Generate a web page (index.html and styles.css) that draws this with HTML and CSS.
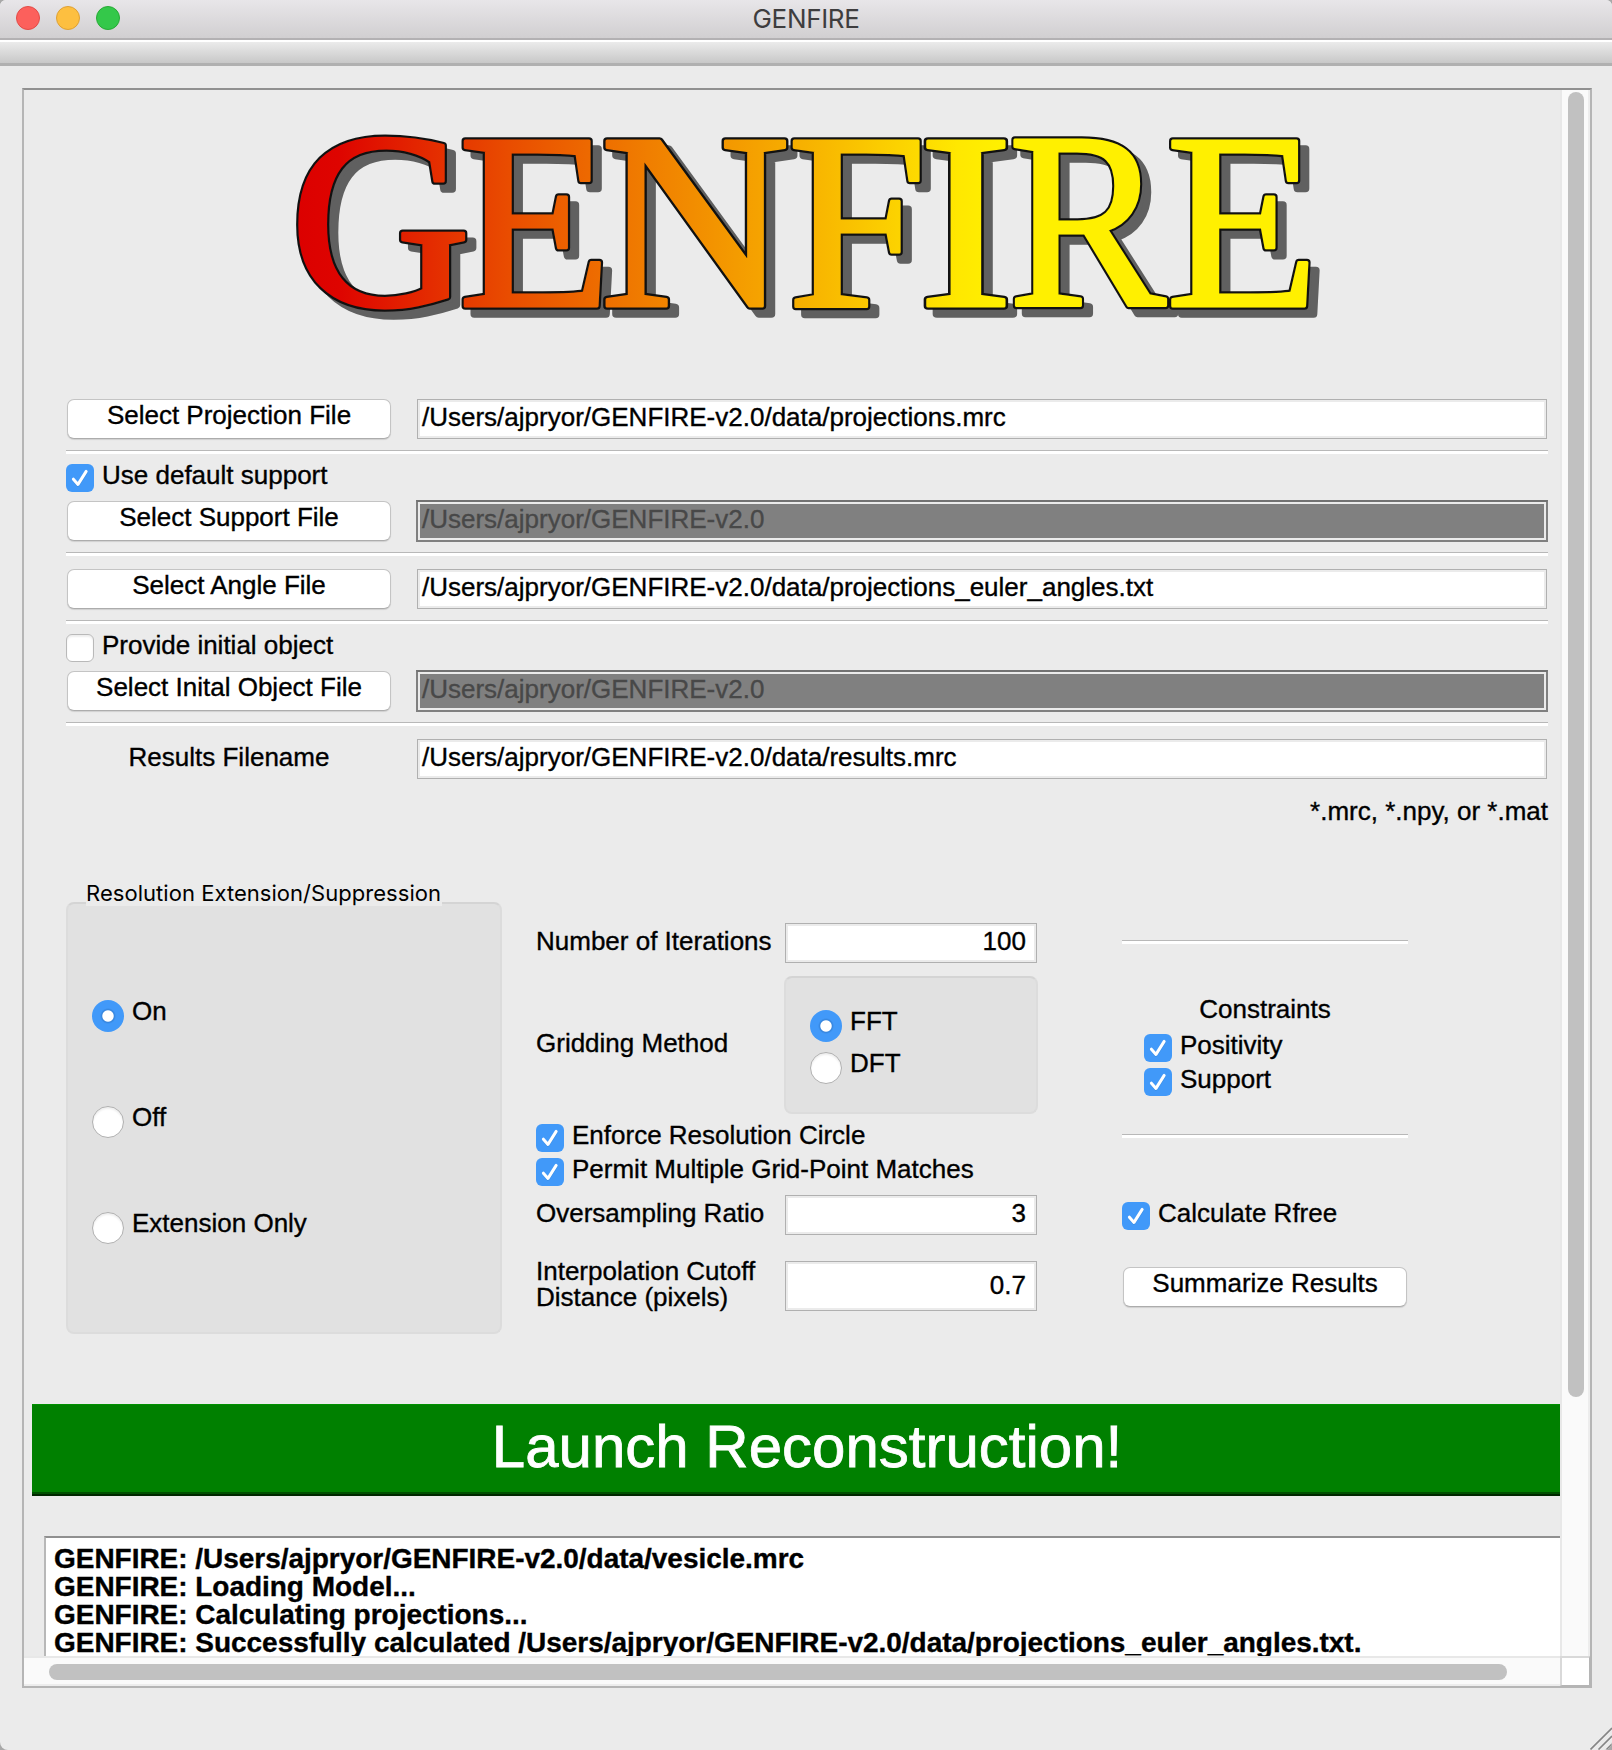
FILE: index.html
```html
<!DOCTYPE html>
<html lang="en">
<head>
<meta charset="utf-8">
<title>GENFIRE</title>
<link rel="stylesheet" href="styles.css">
</head>
<body>
<svg class="defs" width="0" height="0">
  <symbol id="check" viewBox="0 0 28 28">
    <path d="M7.6 15.8 12 21.200 20.400 8.200" fill="none" stroke="#2f7fd0" stroke-opacity=".55" stroke-width="3" stroke-linecap="round" stroke-linejoin="round"/>
    <path d="M7.400 15.200 12 20.400 20.200 7.400" fill="none" stroke="#fff" stroke-width="3" stroke-linecap="round" stroke-linejoin="round"/>
  </symbol>
</svg>
<div class="window">
  <header class="titlebar">
    <div class="lights"><i class="light red"></i><i class="light amber"></i><i class="light green"></i></div>
    <h1 class="title">GENFIRE</h1>
  </header>
  <div class="toolbar"></div>

  <main class="frame">
    <div class="viewport">
      <svg class="logo" viewBox="24 90 1536 304" width="1536" height="304">
        <defs>
          <linearGradient id="fire" gradientUnits="userSpaceOnUse" x1="296" y1="0" x2="1000" y2="0">
            <stop offset="0" stop-color="#dc0000"/>
            <stop offset=".06" stop-color="#de0400"/>
            <stop offset=".3" stop-color="#e94c00"/>
            <stop offset=".5" stop-color="#f07e00"/>
            <stop offset=".75" stop-color="#f8b800"/>
            <stop offset=".94" stop-color="#ffe800"/>
            <stop offset="1" stop-color="#fff000"/>
          </linearGradient>
          <mask id="letters" maskUnits="userSpaceOnUse" x="24" y="90" width="1536" height="304">
            <use href="#word" class="logo-fill"/>
          </mask>
        </defs>
        <use href="#word" class="logo-shadow" x="9" y="8"/>
        <g class="logo-outline">
          <g id="word" class="logo-text">
            <text transform="translate(289.500 306)">G</text>
            <text transform="translate(458 306)">E</text>
            <text transform="translate(599.500 306) scale(1.05 1)">N</text>
            <text transform="translate(787 306)">F</text>
            <text transform="translate(917.500 306) scale(1.150 1)">I</text>
            <text transform="translate(1008 306) scale(.94 1)">R</text>
            <text transform="translate(1165.500 306)">E</text>
          </g>
        </g>
        <rect x="24" y="90" width="1536" height="304" fill="url(#fire)" mask="url(#letters)"/>
      </svg>

      <section class="files">
        <div class="row"><button class="btn">Select Projection File</button><div class="field">/Users/ajpryor/GENFIRE-v2.0/data/projections.mrc</div></div>
        <div class="rule"></div>
        <div class="check"><span class="box on"><svg><use href="#check"/></svg></span><span>Use default support</span></div>
        <div class="row"><button class="btn">Select Support File</button><div class="field off">/Users/ajpryor/GENFIRE-v2.0</div></div>
        <div class="rule spaced"></div>
        <div class="row"><button class="btn">Select Angle File</button><div class="field">/Users/ajpryor/GENFIRE-v2.0/data/projections_euler_angles.txt</div></div>
        <div class="rule"></div>
        <div class="check"><span class="box"></span><span>Provide initial object</span></div>
        <div class="row"><button class="btn">Select Inital Object File</button><div class="field off">/Users/ajpryor/GENFIRE-v2.0</div></div>
        <div class="rule spaced"></div>
        <div class="row"><div class="name">Results Filename</div><div class="field">/Users/ajpryor/GENFIRE-v2.0/data/results.mrc</div></div>
        <p class="hint">*.mrc, *.npy, or *.mat</p>
      </section>

      <section class="settings">
        <div class="group extension">
          <h2 class="group-title"><span>Resolution Extension/Suppression</span></h2>
          <div class="radio"><span class="dot on"></span><span>On</span></div>
          <div class="radio"><span class="dot"></span><span>Off</span></div>
          <div class="radio"><span class="dot"></span><span>Extension Only</span></div>
        </div>

        <div class="params">
          <div class="param"><label>Number of Iterations</label><div class="field num">100</div></div>
          <div class="param gridding"><label>Gridding Method</label>
            <div class="group method">
              <div class="radio"><span class="dot on"></span><span>FFT</span></div>
              <div class="radio"><span class="dot"></span><span>DFT</span></div>
            </div>
          </div>
          <div class="check"><span class="box on"><svg><use href="#check"/></svg></span><span>Enforce Resolution Circle</span></div>
          <div class="check"><span class="box on"><svg><use href="#check"/></svg></span><span>Permit Multiple Grid-Point Matches</span></div>
          <div class="param ratio"><label>Oversampling Ratio</label><div class="field num">3</div></div>
          <div class="param cutoff"><label>Interpolation Cutoff<br>Distance (pixels)</label><div class="field num">0.7</div></div>
        </div>

        <div class="constraints">
          <div class="rule"></div>
          <h2 class="heading">Constraints</h2>
          <div class="check indent"><span class="box on"><svg><use href="#check"/></svg></span><span>Positivity</span></div>
          <div class="check indent"><span class="box on"><svg><use href="#check"/></svg></span><span>Support</span></div>
          <div class="rule"></div>
          <div class="check rfree"><span class="box on"><svg><use href="#check"/></svg></span><span>Calculate Rfree</span></div>
          <button class="btn summary">Summarize Results</button>
        </div>
      </section>

      <button class="launch">Launch Reconstruction!</button>

      <div class="log">GENFIRE: /Users/ajpryor/GENFIRE-v2.0/data/vesicle.mrc<br>GENFIRE: Loading Model...<br>GENFIRE: Calculating projections...<br>GENFIRE: Successfully calculated /Users/ajpryor/GENFIRE-v2.0/data/projections_euler_angles.txt.</div>
    </div>
    <div class="vbar"><div class="thumb"></div></div>
    <div class="hbar"><div class="thumb"></div></div>
    <div class="corner"></div>
  </main>

  <svg class="grip" width="22" height="24" viewBox="0 0 22 24"><path d="M.5 23.500 22 2M8.500 23.500 22 10M16.500 23.500 22 18" stroke="#858585" stroke-width="1.600" fill="none"/></svg>
</div>
</body>
</html>
```
FILE: styles.css
```css
* { box-sizing: border-box; }

body {
  margin: 0;
  background: #a8a8a8;
  font: 26px/30px "Liberation Sans", Arial, sans-serif;
  color: #000;
}

.defs { position: absolute; }

.window {
  position: relative;
  display: flex;
  flex-direction: column;
  width: 1612px;
  height: 1750px;
  background: #ebebeb;
  border-radius: 6px 6px 8px 8px;
  overflow: hidden;
}

/* Title bar */
.titlebar {
  display: grid;
  grid-template-columns: 200px 1fr 200px;
  height: 40px;
  background: linear-gradient(#e8e6e9, #d1cfd1);
  border-bottom: 2px solid #b3b1b3;
}
.lights { display: flex; gap: 16px; padding: 6px 0 0 16px; }
.light { width: 24px; height: 24px; border-radius: 50%; border: 1px solid; }
.red { background: #fc605c; border-color: #e24b47; }
.amber { background: #fdbf40; border-color: #dea034; }
.green { background: #34c84a; border-color: #27aa35; }
.title {
  margin: 0;
  text-align: center;
  font: 400 26px/38px Inter, sans-serif;
  letter-spacing: -0.35px;
  color: #3e3d3e;
}
.toolbar {
  height: 26px;
  background: linear-gradient(#ebebeb, #c8c8c8);
  border-top: 2px solid #fff;
  border-bottom: 3px solid #b0b0b0;
}

/* Scroll area */
.frame {
  display: grid;
  grid-template-columns: 1536px 30px;
  grid-template-rows: 1566px 30px;
  width: 1570px;
  margin: 22px 0 0 22px;
  border: 2px solid #b5b5b5;
  border-top-color: #909090;
}
.viewport { overflow: hidden; -webkit-text-stroke: 0.35px; }
.vbar {
  padding: 2px 4px 0 6px;
  background: #fafafa;
  border-left: 2px solid #e8e8e8;
  border-right: 2px solid #ededed;
}
.vbar .thumb { width: 16px; height: 1305px; border-radius: 8px; background: #c1c1c1; }
.hbar {
  padding: 6px 0 0 25px;
  background: #fafafa;
  border-top: 2px solid #e8e8e8;
  border-bottom: 2px solid #ededed;
}
.hbar .thumb { width: 1458px; height: 16px; border-radius: 8px; background: #c1c1c1; }
.corner { background: #fff; border: 2px solid #d9d9d9; border-right: 1px solid #b5b5b5; border-bottom: 1px solid #b5b5b5; }

/* Logo */
.logo { display: block; -webkit-text-stroke: 0; }
.logo-text { font: 252px "Liberation Serif", "Times New Roman", serif; stroke-linejoin: round; }
.logo-text text { stroke: inherit; stroke-width: inherit; }
.logo-shadow { fill: #606060; stroke: #606060; stroke-width: 7.5px; }
.logo-outline { fill: #111; stroke: #111; stroke-width: 7.5px; }
.logo-fill { fill: #fff; stroke: #fff; stroke-width: 3px; }

/* Shared controls */
.btn {
  display: block;
  width: 324px;
  height: 40px;
  padding: 0 0 8px;
  border: 1px solid #c4c4c4;
  border-bottom-color: #acacac;
  border-radius: 7px;
  background: #fff;
  box-shadow: 0 1px 1px rgba(0, 0, 0, .12);
  font: inherit;
  color: #000;
  line-height: 30px;
}
.field {
  width: 1130px;
  height: 40px;
  padding: 2px 0 0 4px;
  border: 1px solid #b0b0b0;
  outline: 2px solid #ebebeb;
  outline-offset: -3px;
  background: #fff;
  line-height: 30px;
  white-space: nowrap;
}
.field.off {
  width: 1132px;
  height: 42px;
  padding: 2px 0 0 5px;
  border: 1px solid #808080;
  border-top: 2px solid #727272;
  outline-offset: -4px;
  background: #808080;
  color: #484848;
}
.rule { height: 4px; background: #fff; border-top: 1px solid #b8b8b8; }

.check { display: flex; gap: 8px; line-height: 22px; height: 28px; white-space: nowrap; }
.box {
  flex: none;
  width: 28px;
  height: 28px;
  border: 1px solid #b9b9b9;
  border-radius: 6px;
  background: #fff;
  box-shadow: inset 0 2px 2px rgba(0, 0, 0, .07);
}
.box.on { border: 0; background: #4199f9; box-shadow: none; }
.box svg { display: block; width: 28px; height: 28px; }

.radio { display: flex; gap: 8px; height: 32px; line-height: 22px; }
.dot {
  flex: none;
  width: 32px;
  height: 32px;
  border: 1px solid #b0b0b0;
  border-radius: 50%;
  background: #fff;
  box-shadow: inset 0 2px 2px rgba(0, 0, 0, .07);
}
.dot.on {
  border: 0;
  background: radial-gradient(circle at 50% 50%, #fff 5.2px, #3584dc 6.2px, #4199f9 8px);
  box-shadow: none;
}

.group {
  border: 2px solid #dcdcdc;
  border-top-color: #d4d4d4;
  border-radius: 8px;
  background: #e1e1e1;
}

/* File pickers */
.files { padding: 4px 12px 0 42px; }
.row { display: flex; justify-content: space-between; align-items: center; height: 42px; padding-left: 1px; }
.row .field:not(.off) { margin-right: 1px; }
.files .rule { margin: 10px 0; }
.files .rule.spaced { margin-bottom: 12px; }
.files .check { margin-bottom: 8px; }
.name { width: 324px; padding-bottom: 4px; text-align: center; }
.hint { margin: 16px 0 0; text-align: right; }

/* Reconstruction settings */
.settings {
  display: grid;
  grid-template-columns: 436px 502px 286px;
  column-gap: 34px;
  align-items: start;
  padding: 64px 0 0 42px;
}
.extension { height: 432px; margin-top: 12px; padding-left: 24px; }
.group-title { margin: -26px 0 94px -6px; height: 28px; font: 400 22px/30px Inter, sans-serif; letter-spacing: 0.04px; -webkit-text-stroke: 0; }
.group-title span { display: inline-block; width: 356px; height: 28px; background: #ebebeb; white-space: nowrap; }
.extension .radio { margin-bottom: 74px; }

.params { padding-top: 33px; }
.param { display: flex; justify-content: space-between; padding-right: 1px; }
.param label { padding-top: 3px; white-space: nowrap; }
.num { width: 252px; padding-right: 10px; text-align: right; }
.gridding { margin: 13px 0 10px; padding-right: 0; }
.gridding label { padding-top: 52px; }
.method { width: 254px; height: 138px; padding: 32px 0 0 24px; }
.method .radio { margin-bottom: 10px; }
.params .check { margin-bottom: 6px; }
.ratio { margin-top: 9px; }
.cutoff { margin-top: 23px; }
.cutoff label { padding-top: 0; line-height: 26px; }
.cutoff .field { height: 50px; margin-top: 3px; line-height: 42px; }

.constraints { margin-left: 50px; padding-top: 50px; width: 286px; }
.heading { margin: 50px 0 10px; font: inherit; text-align: center; }
.indent { margin: 0 0 6px 22px; }
.indent + .rule { margin-top: 38px; }
.rfree { margin-top: 64px; }
.summary { width: 284px; margin: 37px 0 0 1px; }

/* Launch and log */
.launch {
  display: block;
  width: 1528px;
  height: 92px;
  margin: 70px 0 0 8px;
  padding: 0 0 4px 22px;
  border: 0;
  border-bottom: 2px solid #002800;
  background: linear-gradient(#009000 1px, #008000 1px, #008000 88px, #005000 88px);
  color: #fff;
  font: 60px/84px "Liberation Sans", Arial, sans-serif;
  -webkit-text-stroke: 0.8px;
}
.log {
  height: 300px;
  margin: 40px 0 0 20px;
  padding: 7px 0 0 8px;
  border-top: 2px solid #909090;
  border-left: 2px solid #b8b8b8;
  background: #fff;
  font-weight: bold;
  font-size: 28px;
  line-height: 28px;
  letter-spacing: -0.03px;
  white-space: nowrap;
}

.grip { position: absolute; right: 0; bottom: 0; }
```
